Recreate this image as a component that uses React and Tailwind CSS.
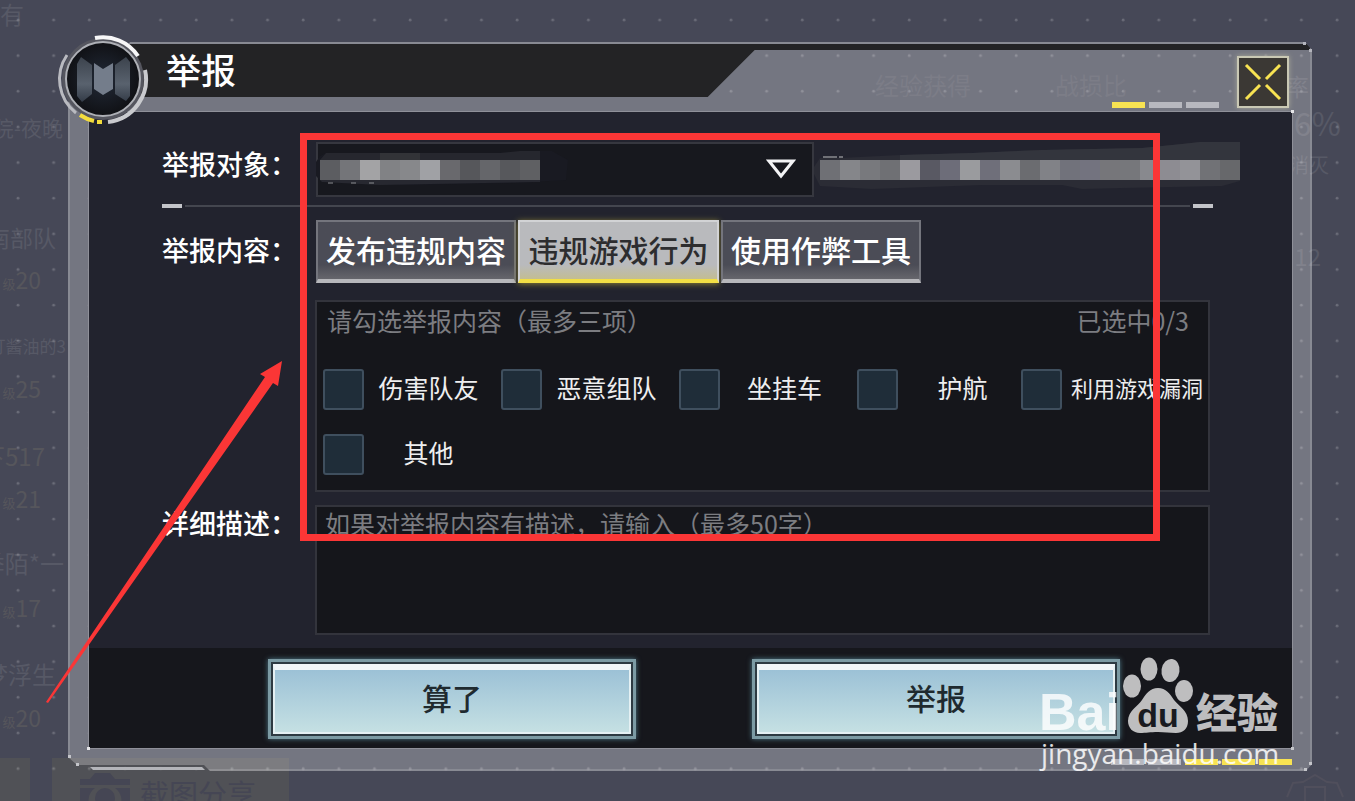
import React, { useState } from "react";

const TABS = ["发布违规内容", "违规游戏行为", "使用作弊工具"];

const LABEL = "flex-1 whitespace-nowrap pb-[6px] pr-2 text-center text-[25px] leading-8 text-[#eeeeef]";

const REASONS = [
  { id: "team", text: "伤害队友", cls: LABEL },
  { id: "group", text: "恶意组队", cls: LABEL },
  { id: "afk", text: "坐挂车", cls: LABEL },
  {
    id: "escort",
    text: "护航",
    cls: "flex-1 whitespace-nowrap pb-[6px] pl-[6px] text-center text-[25px] leading-8 text-[#eeeeef]",
  },
  {
    id: "bug",
    text: "利用游戏漏洞",
    cls: "flex-1 whitespace-nowrap pb-[6px] pl-1 text-center text-[22px] leading-8 text-[#eeeeef]",
  },
  { id: "other", text: "其他", cls: LABEL },
];

const NAME_CELLS = [
  "#5c5d61", "#747579", "#a3a3a5", "#818285", "#87888b", "#a0a1a5",
  "#69696d", "#56575b", "#65666a", "#57585c", "#5f6063",
];

const ID_CELLS = [
  "#6f7075", "#85868a", "#78797d", "#6f7074", "#9b9a9f", "#595963", "#6d6d79",
  "#9a9b9e", "#6f6f7a", "#8b8c90", "#6b6c70", "#818287", "#71727b", "#73737f",
  "#76767a", "#76777b", "#88898e", "#8d8c92", "#939398", "#717276", "#67686b",
];

function NameMosaic() {
  return (
    <svg width="254" height="40" viewBox="0 0 254 40" aria-hidden="true">
      <path d="M4 6 L10 3 H190 L210 1 H236 L252 10 L250 30 L200 33 L90 35 L60 33 L6 32 L0 26 V12Z" fill="#191a22" />
      <path d="M4 10 L10 3 H190 V10Z M184 10 V3 L204 1 H224 V10Z" fill="#26272e" />
      <path d="M64 3 H84 V10 H64Z M84 3 H104 V10 H84Z" fill="#323337" />
      <path d="M4 30 H224 V32 L64 35 L6 32Z" fill="#272830" />
      {NAME_CELLS.map((c, i) => (
        <rect key={i} x={4 + i * 20} y="10" width="20" height="20" fill={c} />
      ))}
      <path d="M12 33 h5 M35 33 h5 M53 33 h5" stroke="#8b8c90" strokeWidth="1" />
    </svg>
  );
}

function IdMosaic() {
  return (
    <svg width="428" height="52" viewBox="0 0 428 52" aria-hidden="true">
      <path d="M0 28 L8 16 H28 L88 13 L160 11 L230 8 L330 6 L370 2 L388 0 H428 V39 L410 44 L310 46 L270 47 L250 43 L170 43 L60 47 L8 44Z" fill="#2b2c35" />
      <path d="M88 13 L160 11 L230 8 L330 6 L370 2 L388 0 H428 V20 H88Z" fill="#33353d" />
      <path d="M11 15 h14 M27 15 h4" stroke="#8b8c90" strokeWidth="1.5" />
      {ID_CELLS.map((c, i) => (
        <rect key={i} x={8 + i * 20} y="18" width="20" height="20" fill={c} />
      ))}
    </svg>
  );
}

function Emblem() {
  return (
    <svg width="96" height="96" viewBox="0 0 96 96" aria-hidden="true">
      <defs>
        <radialGradient id="emblemFace">
          <stop offset="0" stopColor="#222a38" />
          <stop offset="1" stopColor="#101115" />
        </radialGradient>
        <linearGradient id="emblemPlate" x1="0" y1="0" x2="0" y2="1">
          <stop offset="0" stopColor="#3c434d" />
          <stop offset="0.6" stopColor="#59626e" />
          <stop offset="1" stopColor="#333b47" />
        </linearGradient>
      </defs>
      <circle cx="48" cy="48" r="41" fill="#55565f" />
      <circle cx="48" cy="48" r="37" fill="url(#emblemFace)" stroke="#aeb0b6" strokeWidth="2" />
      <path d="M22 33 L26 26 L37 34 V63 L27 71 L22 65Z M60 34 L71 26 L75 31 V65 L71 70 L60 63Z" fill="url(#emblemPlate)" />
      <path d="M39 32 L48 38 L58 32 V58 L48 64 L39 58Z" fill="#747d8b" />
      <g fill="none" strokeLinecap="butt">
        <path d="M40 7 A42 42 0 0 1 83 25" stroke="#f7f7f8" strokeWidth="4" />
        <path d="M90 39 A43 43 0 0 1 53 91" stroke="#c9cace" strokeWidth="4" />
        <path d="M12 24 A43 43 0 0 0 21 82" stroke="#b9bac0" strokeWidth="3" />
        <path d="M25 84 A43 43 0 0 0 39 90" stroke="#f3dc3c" strokeWidth="4" />
        <path d="M42 91 L47 91" stroke="#f3dc3c" strokeWidth="4" />
      </g>
    </svg>
  );
}

function Ticks({ items }) {
  return (
    <div className="flex gap-1" aria-hidden="true">
      {items.map((on, i) => (
        <span key={i} className={on ? "h-[6px] w-[33px] bg-[#f8e352]" : "h-[6px] w-[33px] bg-[#b7b8bf]"} />
      ))}
    </div>
  );
}

function Backdrop() {
  return (
    <div className="absolute inset-0 overflow-hidden text-[#575966]" aria-hidden="true">
      <div className="absolute -left-6 -top-1 text-[24px]">所有</div>
      <div className="absolute right-[1292px] top-[112px] whitespace-nowrap text-[21px]">医院-夜晚</div>
      <div className="absolute right-[1299px] top-[220px] whitespace-nowrap text-[23px]">西南部队</div>
      <div className="absolute right-[1289px] top-[333px] whitespace-nowrap text-[17px]">打酱油的3</div>
      <div className="absolute right-[1310px] top-[438px] whitespace-nowrap text-[24px] text-[#56565c]">天下517</div>
      <div className="absolute right-[1291px] top-[545px] whitespace-nowrap text-[24px]">季陌*一</div>
      <div className="absolute right-[1299px] top-[656px] whitespace-nowrap text-[24px]">梦浮生</div>
      {[
        ["20", "top-[263px]"],
        ["25", "top-[372px]"],
        ["21", "top-[482px]"],
        ["17", "top-[591px]"],
        ["20", "top-[701px]"],
      ].map(([n, top], i) => (
        <div key={i} className={`absolute right-[1314px] flex items-baseline text-[#56565c] ${top}`}>
          <span className="text-[13px]">级</span>
          <span className="text-[23px] leading-8">{n}</span>
        </div>
      ))}
      <div className="absolute right-[46px] top-[70px] text-[24px] leading-8">率</div>
      <div className="absolute right-[14px] top-[106px] text-[32px] leading-8">6%</div>
      <div className="absolute right-[26px] top-[150px] whitespace-nowrap text-[20px]">消灭</div>
      <div className="absolute right-[34px] top-[238px] text-[24px]">12</div>
      <div className="absolute -left-4 top-[758px] h-11 w-[46px] bg-[#505156]" />
      <div className="absolute left-[52px] top-[758px] flex h-[70px] w-[237px] items-center gap-2 bg-[#505156] pl-[26px] text-[#454654]">
        <svg width="54" height="44" viewBox="0 0 54 44">
          <path d="M2 8 H12 L17 2 H32 L37 8 H52 V14 H2Z M2 17 H17 A15 15 0 0 0 15 40 H2Z M52 17 H37 A15 15 0 0 1 39 40 H52Z" fill="#454654" />
          <circle cx="27" cy="27" r="10" fill="#454654" />
        </svg>
        <span className="text-[29px] leading-10">截图分享</span>
      </div>
      <svg className="absolute bottom-0 right-[10px]" width="60" height="28" viewBox="0 0 60 28">
        <path d="M2 24 L8 10 L18 9 L30 2 L42 9 L52 10 L58 24 M20 28 V14 H40 V28" fill="none" stroke="#504f5c" strokeWidth="2" />
      </svg>
    </div>
  );
}

function DotGrid() {
  return (
    <svg className="absolute inset-0 h-full w-full" aria-hidden="true">
      <defs>
        <pattern id="dots" x="0" y="2" width="35.65" height="35.65" patternUnits="userSpaceOnUse">
          <circle cx="18" cy="18" r="1.4" fill="#ffffff" fillOpacity="0.2" />
        </pattern>
      </defs>
      <rect width="100%" height="100%" fill="url(#dots)" />
    </svg>
  );
}

function Frame() {
  return (
    <div className="absolute inset-0" aria-hidden="true">
      <div className="absolute inset-0 border-2 border-white/15 bg-white/25 [clip-path:polygon(62px_0,calc(100%_-_7px)_0,100%_8px,100%_calc(100%_-_7px),calc(100%_-_6px)_100%,142px_100%,136px_calc(100%_-_6px),9px_calc(100%_-_6px),0_calc(100%_-_14px),0_60px,35px_37px)]">
        <div className="h-[6px] bg-[#232325]" />
      </div>
      <div className="absolute bottom-px left-[22px] h-[3px] w-[115px] bg-[#b4b5ba] [clip-path:polygon(0_0,112px_0,100%_100%,3px_100%)]" />
      <span className="absolute right-0 top-[7px] size-[3px] bg-[#b4b5bd]" />
      <span className="absolute right-[6px] top-0 size-[3px] bg-[#b4b5bd]" />
      <span className="absolute bottom-[13px] left-0 size-[3px] bg-[#c4c5ca]" />
      <span className="absolute bottom-[5px] left-2 size-[3px] bg-[#c4c5ca]" />
      <span className="absolute bottom-[6px] right-0 size-[3px] bg-[#c4c5ca]" />
      <span className="absolute bottom-0 right-[5px] size-[3px] bg-[#c4c5ca]" />
    </div>
  );
}

function ActionButton({ children }) {
  return (
    <button
      type="button"
      className="h-[80px] w-[368px] border-[3px] border-[#7c9ba4] bg-[#2d3a42] p-[2px] shadow-[0_0_5px_#4f7785]"
    >
      <span className="flex h-full items-center justify-center border-2 border-t-[6px] border-[#e4f0f3] border-t-[#f1f6f8] bg-linear-to-b from-[#9cc1d6] to-[#c5e0e3] pb-2 text-[30px] leading-9 font-medium text-[#1f2a2f]">
        {children}
      </span>
    </button>
  );
}

function Watermark() {
  return (
    <a
      href="#jingyan"
      className="absolute bottom-[32px] right-[66px] flex w-[248px] flex-col gap-[2px] text-white/85"
    >
      <svg className="-ml-1" width="248" height="80" viewBox="0 0 248 80" role="img" aria-label="Baidu 经验">
        <g fill="#ffffff" fillOpacity="0.72">
          <text x="2" y="75" fontFamily="Liberation Sans, Arial, sans-serif" fontWeight="700" fontSize="52" fillOpacity="0.8">Bai</text>
          <ellipse cx="95" cy="31" rx="9" ry="11.5" />
          <ellipse cx="112" cy="14" rx="8.5" ry="11.5" />
          <ellipse cx="133.500" cy="15.500" rx="9" ry="11.500" transform="rotate(8 133.500 15.500)" />
          <ellipse cx="147" cy="36" rx="9" ry="11" />
          <path d="M121 33 C129 33 133 39 137 45 C142 51 151 56 151 66 C151 74 146 78 139 78 C132 78 128 77 121 77 C113 77 109 78 103 78 C96 78 91 73 91 66 C91 56 101 51 105 45 C109 39 113 33 121 33Z" />
          <text x="159" y="73" fontFamily="Noto Sans CJK SC, sans-serif" fontWeight="900" fontSize="41">经验</text>
        </g>
        <text x="121" y="72" textAnchor="middle" fill="#191a20" fontFamily="Liberation Sans, Arial, sans-serif" fontWeight="700" fontSize="34">du</text>
      </svg>
      <span className="whitespace-nowrap font-['Open_Sans',sans-serif] text-[28px] leading-8">jingyan.baidu.com</span>
    </a>
  );
}

function Annotation() {
  return (
    <div className="pointer-events-none absolute inset-0" aria-hidden="true">
      <div className="absolute left-[300px] top-[133px] h-[408px] w-[860px] border-[7px] border-[#fb3636]" />
      <svg className="absolute left-[40px] top-[355px]" width="250" height="355" viewBox="40 355 250 355">
        <path d="M282 361 L260 374 L265 377 L46 702 L48 703 L273 383 L278 386Z" fill="#fb3636" />
      </svg>
    </div>
  );
}

export default function App() {
  const [tab, setTab] = useState(1);
  const [picked, setPicked] = useState([]);

  const toggle = (id) =>
    setPicked((p) => (p.includes(id) ? p.filter((x) => x !== id) : p.length < 3 ? [...p, id] : p));

  return (
    <div className="relative min-h-screen overflow-hidden bg-[#464857] font-['Noto_Sans_CJK_SC',sans-serif]">
      <Backdrop />
      <DotGrid />
      <main className="relative pb-[30px] pl-[68px] pr-[43px] pt-[42px]">
        <section className="relative pb-[23px] pl-[21px] pr-5" aria-labelledby="title">
          <Frame />
          <div className="absolute right-[185px] top-[27px] flex gap-[84px] text-[24px] leading-8 text-[#82828c]/60" aria-hidden="true">
            <span>经验获得</span>
            <span>战损比</span>
          </div>

          <header className="relative flex h-[70px] justify-between pt-2">
            <div className="-ml-5 flex h-[47px] w-[57%] items-center bg-[#232325] pb-[10px] pl-[97px] [clip-path:polygon(60px_0,100%_0,calc(100%_-_47px)_100%,40px_100%)]">
              <h1 id="title" className="text-[35px] leading-9 font-medium text-white">举报</h1>
            </div>
            <div className="flex items-start gap-[18px] pr-[3px] pt-[6px]">
              <div className="self-end pb-1">
                <Ticks items={[true, false, false]} />
              </div>
              <button
                type="button"
                aria-label="关闭"
                className="flex size-[52px] items-center justify-center border-2 border-[#c9c8b4] bg-[#3b3834] shadow-[0_0_5px_#a9a898]"
              >
                <svg width="40" height="40" viewBox="0 0 40 40" aria-hidden="true">
                  <path d="M3 3 L17 17 M37 3 L23 17 M3 37 L17 23 M37 37 L23 23" stroke="#f8e352" strokeWidth="3" />
                </svg>
              </button>
            </div>
          </header>
          <div className="absolute -left-[13px] -top-[11px] z-10">
            <Emblem />
          </div>

          <div className="relative bg-[#22232e] outline-1 outline-[#8f9099]">
            <div className="pb-[13px] pl-[73px] pt-[30px]">
              <div className="flex h-[55px] items-start pr-[52px]">
                <label htmlFor="target" className="w-[154px] shrink-0 pt-[2px] text-[27px] leading-10 font-medium text-white">
                  举报对象：
                </label>
                <div className="relative h-[55px] w-[498px] shrink-0">
                  <select id="target" className="h-full w-full appearance-none border-2 border-[#36373f] bg-[#17181e] text-transparent">
                    <option value="player" aria-label="玩家" />
                  </select>
                  <div className="pointer-events-none absolute left-0 top-2">
                    <NameMosaic />
                  </div>
                  <svg className="pointer-events-none absolute right-[18px] top-4" width="30" height="22" viewBox="0 0 30 22" aria-hidden="true">
                    <path d="M3 3 H27 L15 18Z" fill="none" stroke="#f3f3f5" strokeWidth="3" />
                  </svg>
                </div>
                <div className="-ml-[2px]">
                  <IdMosaic />
                </div>
              </div>

              <div className="mt-[7px] flex h-1 items-center gap-[3px] pr-[79px]" aria-hidden="true">
                <span className="h-1 w-5 bg-[#c3c4c9]" />
                <span className="h-[2px] flex-1 bg-[#44464f]" />
                <span className="h-1 w-5 bg-[#c3c4c9]" />
              </div>

              <div className="grid grid-cols-[153px_1fr] pr-[82px]">
                <div id="content-label" className="mt-3 pt-[10px] text-[27px] leading-10 font-medium text-white">举报内容：</div>
                <div>
                  <div className="mt-3 flex gap-[2px] pl-px" role="tablist" aria-labelledby="content-label">
                    {TABS.map((name, i) => (
                      <button
                        key={name}
                        type="button"
                        role="tab"
                        aria-selected={tab === i}
                        onClick={() => setTab(i)}
                        className={
                          tab === i
                            ? "h-[63px] w-[201px] whitespace-nowrap border-2 border-b-4 border-[#d2d3d5] border-b-[#f2df45] bg-linear-to-b from-[#b9babd] from-75% to-[#c3bd92] pb-1 text-[30px] leading-10 font-medium text-[#2d2d2f] shadow-[0_1px_6px_#8a8036]"
                            : "h-[63px] w-[200px] whitespace-nowrap border-2 border-b-4 border-[#74757d] border-b-[#b7b7bb] bg-linear-to-b from-[#4b4c56] from-75% to-[#66666c] pb-1 text-[30px] leading-10 font-medium text-white"
                        }
                      >
                        {name}
                      </button>
                    ))}
                  </div>

                  <fieldset className="mt-[17px] h-[192px] border-2 border-[#33343c] bg-[#15161b]">
                    <div className="flex justify-between pl-[10px] pr-[19px] text-[25px] leading-9 text-[#7c7d81]">
                      <span className="whitespace-nowrap">请勾选举报内容（最多三项）</span>
                      <span className="whitespace-nowrap">已选中{picked.length}/3</span>
                    </div>
                    <div className="mt-[31px] grid grid-cols-[178fr_178fr_178fr_164fr_187fr] gap-y-6 pl-[6px]">
                      {REASONS.map((r) => (
                        <div key={r.id} className="flex h-[41px] items-center">
                          <input
                            id={r.id}
                            type="checkbox"
                            checked={picked.includes(r.id)}
                            onChange={() => toggle(r.id)}
                            className="size-[41px] shrink-0 appearance-none rounded-[3px] border-2 border-[#3f4f5e] bg-[#1f2d39] checked:bg-[#4d7f93]"
                          />
                          <label htmlFor={r.id} className={r.cls}>
                            {r.text}
                          </label>
                        </div>
                      ))}
                    </div>
                  </fieldset>
                </div>

                <label htmlFor="detail" className="mt-[11px] text-[27px] leading-10 font-medium text-white">
                  详细描述：
                </label>
                <textarea
                  id="detail"
                  maxLength={50}
                  placeholder="如果对举报内容有描述，请输入（最多50字）"
                  className="mt-[13px] block h-[130px] w-full resize-none border-2 border-[#33343c] bg-[#15161b] px-2 text-[25px] leading-8 text-white placeholder:text-[#7c7d81]"
                />
              </div>
            </div>

            <footer className="flex h-[100px] items-start justify-center gap-[116px] bg-[#16171c] pl-[7px] pt-[11px]">
              <ActionButton>算了</ActionButton>
              <ActionButton>举报</ActionButton>
            </footer>
            <span className="absolute -right-[2px] -top-[2px] size-[3px] bg-[#e5e5e8]" />
            <span className="absolute -bottom-[2px] -left-[2px] size-[3px] bg-[#e5e5e8]" />
            <span className="absolute -bottom-[2px] -right-[2px] size-[3px] bg-[#c4c5ca]" />
          </div>
          <div className="absolute bottom-[6px] right-5">
            <Ticks items={[false, false, true, true, true]} />
          </div>
        </section>
      </main>
      <Watermark />
      <Annotation />
    </div>
  );
}
